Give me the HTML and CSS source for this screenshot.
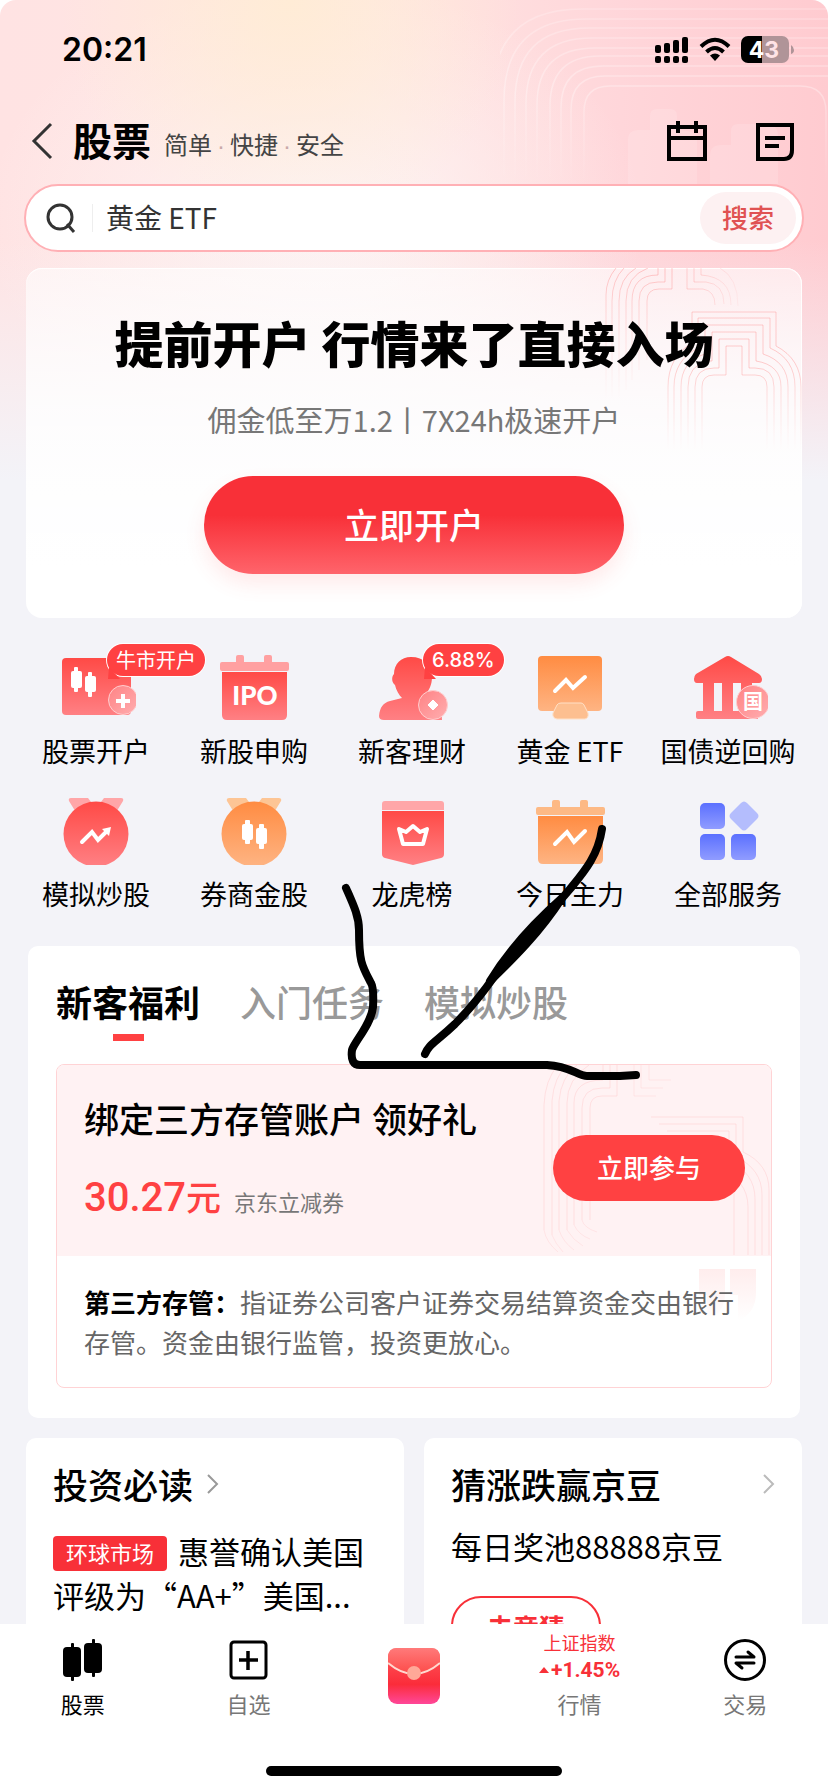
FILE: index.html
```html
<!DOCTYPE html>
<html lang="zh-CN">
<head>
    <meta charset="UTF-8">
    <meta name="viewport" content="width=device-width, initial-scale=1.0">
    <title>股票</title>
    <link rel="stylesheet" href="styles.css">
</head>
<body>
<div class="page">
    <main class="content">
        <svg class="header-lines" width="328" height="184" viewBox="0 0 328 184" fill="none" aria-hidden="true">
            <defs>
                <linearGradient id="lineFade" x1="0" y1="0" x2="0" y2="184" gradientUnits="userSpaceOnUse">
                    <stop offset="0" stop-color="#fff" stop-opacity=".2"/>
                    <stop offset=".5" stop-color="#fff" stop-opacity=".32"/>
                    <stop offset="1" stop-color="#fff" stop-opacity="0"/>
                </linearGradient>
            </defs>
            <g stroke="url(#lineFade)" stroke-width="1.5">
                <path d="M84 184V112q0-26 26-26H300q26 0 26 26v72"/>
                <path d="M71 184V110q0-34 34-34H328"/>
                <path d="M61 184V108q0-42 42-42H328"/>
                <path d="M50 184V106q0-50 50-50H328"/>
                <path d="M37 184V105q0-57 58-57H328"/>
                <path d="M26 184V104q0-66 66-66H328"/>
                <path d="M15 184V102q0-74 74-74H328"/>
                <path d="M4 184V101q0-82 82-82H328"/>
                <path d="M-8 184V99q0-90 90-90H328"/>
            </g>
            <path d="M128 184V140q0-10 10-10h12v-14q0-7 7-7h13q7 0 7 7v14q20 0 20 10v44z" fill="#fff" fill-opacity=".14"/>
            <path d="M210 184v-28q0-11 11-11h10v-14q0-7 7-7h28q12 0 12 12v48z" fill="#fff" fill-opacity=".14"/>
        </svg>

        <div class="status-bar">
            <span class="time">20:21</span>
            <div class="status-icons">
                <svg width="34" height="27" viewBox="0 0 34 27">
                    <rect x="0" y="9" width="6" height="8" rx="2"/>
                    <rect x="9" y="7" width="6" height="10" rx="2"/>
                    <rect x="18" y="4" width="6" height="13" rx="2"/>
                    <rect x="27" y="1" width="6" height="16" rx="2"/>
                    <rect x="0" y="20" width="6" height="7" rx="2"/>
                    <rect x="9" y="20" width="6" height="7" rx="2"/>
                    <rect x="18" y="20" width="6" height="7" rx="2"/>
                    <rect x="27" y="20" width="6" height="7" rx="2"/>
                </svg>
                <svg width="32" height="24" viewBox="0 0 32 24">
                    <path d="M2 9.500Q16-4 30 9.500M7.500 15Q16 7 24.500 15" fill="none" stroke="#000" stroke-width="4"/>
                    <path d="M16 24l-5-5.500q5-4 10 0z"/>
                </svg>
                <svg width="53" height="27" viewBox="0 0 53 27">
                    <path d="M21 0h20a7 7 0 0 1 7 7v13a7 7 0 0 1-7 7H21z" fill="#b09498"/>
                    <path d="M21 0H7a7 7 0 0 0-7 7v13a7 7 0 0 0 7 7h14z"/>
                    <path d="M50 9q3 2 3 5t-3 4z" fill="#b09498"/>
                    <text x="23" y="22" class="battery-text" text-anchor="middle">4<tspan fill="#ffe3e6">3</tspan></text>
                </svg>
            </div>
        </div>

        <header class="nav">
            <button type="button" class="icon-btn" aria-label="返回">
                <svg width="22" height="38" viewBox="0 0 22 38" fill="none" stroke="#333" stroke-width="3">
                    <path d="M20 2L3 19l17 17"/>
                </svg>
            </button>
            <h1>股票</h1>
            <p class="slogan">简单<i>·</i>快捷<i>·</i>安全</p>
            <div class="nav-actions">
                <button type="button" class="icon-btn" aria-label="日历">
                    <svg width="40" height="40" viewBox="0 0 40 40" fill="none" stroke="#000" stroke-width="4">
                        <path d="M2 6h36v32H2zM2 17h36M11 0v12M29 0v12"/>
                    </svg>
                </button>
                <button type="button" class="icon-btn" aria-label="记录">
                    <svg width="38" height="40" viewBox="0 0 38 40" fill="none" stroke="#000" stroke-width="4">
                        <path d="M2 4h34v25q0 9-8 9H2zM9 17h20M9 25h14"/>
                    </svg>
                </button>
            </div>
        </header>

        <form class="search">
            <svg width="30" height="30" viewBox="0 0 30 30" fill="none" stroke="#333" stroke-width="3">
                <circle cx="14" cy="14" r="12"/>
                <path d="M21 21l7 8"/>
            </svg>
            <input type="text" aria-label="搜索股票" value="黄金 ETF">
            <button type="button">搜索</button>
        </form>

        <section class="hero">
            <svg class="hero-lines" width="262" height="200" viewBox="0 8 262 200" fill="none" aria-hidden="true">
                <defs>
                    <linearGradient id="redFade" x1="0" y1="0" x2="0" y2="200" gradientUnits="userSpaceOnUse">
                        <stop offset="0" stop-color="#f66" stop-opacity=".25"/>
                        <stop offset=".5" stop-color="#f66" stop-opacity=".32"/>
                        <stop offset=".95" stop-color="#f66" stop-opacity="0"/>
                    </linearGradient>
                    <linearGradient id="redFadeLeft" x1="0" y1="0" x2="0" y2="140" gradientUnits="userSpaceOnUse">
                        <stop offset="0" stop-color="#f66" stop-opacity=".35"/>
                        <stop offset="1" stop-color="#f66" stop-opacity="0"/>
                    </linearGradient>
                    <linearGradient id="redFadeSide" x1="60" y1="0" x2="215" y2="0" gradientUnits="userSpaceOnUse">
                        <stop offset="0" stop-color="#f66" stop-opacity=".3"/>
                        <stop offset=".6" stop-color="#f66" stop-opacity=".25"/>
                        <stop offset="1" stop-color="#f66" stop-opacity="0"/>
                    </linearGradient>
                </defs>
                <g stroke="url(#redFade)">
                    <path d="M162 200V127q0-12 12-12h12V86h16v29h13q12 0 12 12v73"/>
                    <path d="M155 200V127q0-19 19-19h5V79h30v29h6q19 0 19 19v73"/>
                    <path d="M148 200V127q0-22 20-26h4V72h44v29q25 4 25 26v73"/>
                    <path d="M141 200V127q0-26 24-33V65h58v29q25 8 25 33v73"/>
                    <path d="M134 200V127q0-27 24-39V58h72v30q25 11 25 39v73"/>
                    <path d="M128 200V127q0-30 24-44V52h84v34q25 13 25 41v73"/>
                </g>
                <g stroke="url(#redFadeLeft)">
                    <path d="M107 100V41q0-12 12-12h13V8"/>
                    <path d="M99 110V41q0-19 19-19h7V8"/>
                    <path d="M92 120V41q0-26 26-26V8"/>
                    <path d="M86 130V41Q86 16 108 8"/>
                    <path d="M79 140V41Q79 18 96 8"/>
                    <path d="M72 145V41Q72 20 84 8"/>
                    <path d="M66 145V35Q66 20 76 8"/>
                </g>
                <g stroke="url(#redFadeSide)">
                    <path d="M147 8v21h16q12 2 12 16"/>
                    <path d="M154 8v14h12q18 2 18 22"/>
                    <path d="M161 8v7q30 2 30 30"/>
                    <path d="M180 8q18 10 18 38"/>
                </g>
            </svg>
            <h2>提前开户 行情来了直接入场</h2>
            <p>佣金低至万1.2丨7X24h极速开户</p>
            <button type="button">立即开户</button>
        </section>

        <nav class="services">
            <a href="#">
                <svg width="80" height="72" viewBox="0 0 80 72">
                    <defs>
                        <linearGradient id="red" x1="0" y1="0" x2="0" y2="1">
                            <stop offset="0" stop-color="#ff4a46"/>
                            <stop offset="1" stop-color="#ff8084"/>
                        </linearGradient>
                        <linearGradient id="orange" x1="0" y1="0" x2="0" y2="1">
                            <stop offset="0" stop-color="#ff8c42"/>
                            <stop offset="1" stop-color="#feb483"/>
                        </linearGradient>
                        <linearGradient id="blue" x1="0" y1="0" x2="0" y2="1">
                            <stop offset="0" stop-color="#5b70ff"/>
                            <stop offset="1" stop-color="#909cff"/>
                        </linearGradient>
                        <linearGradient id="coin" x1="0" y1="0" x2="1" y2="1">
                            <stop offset="0" stop-color="#ff8284"/>
                            <stop offset="1" stop-color="#ffaeb0"/>
                        </linearGradient>
                    </defs>
                    <rect x="6" y="8" width="69" height="57" rx="4" fill="url(#red)"/>
                    <g fill="#fff">
                        <rect x="15" y="21" width="11" height="17" rx="2"/>
                        <rect x="18" y="17" width="4" height="25" rx="1"/>
                        <rect x="29" y="26" width="11" height="16" rx="2"/>
                        <rect x="32" y="22" width="4" height="25" rx="1"/>
                    </g>
                    <circle cx="67" cy="50" r="14.500" fill="url(#coin)" stroke="#ffcdce"/>
                    <path d="M60 51h14M67 44v14" stroke="#fff" stroke-width="4"/>
                </svg>
                <span>股票开户</span>
                <em class="badge">牛市开户</em>
            </a>
            <a href="#">
                <svg width="80" height="72" viewBox="0 0 80 72">
                    <path d="M22 12V7q0-2 2-2h4q2 0 2 2v5h20V7q0-2 2-2h4q2 0 2 2v5h15q2 0 2 2v5q0 2-2 2H8q-2 0-2-2v-5q0-2 2-2z" fill="#ffa0a1"/>
                    <path d="M8 22h65v43q0 5-5 5H13q-5 0-5-5z" fill="url(#red)"/>
                    <text x="41" y="55" class="ipo-text" text-anchor="middle">IPO</text>
                </svg>
                <span>新股申购</span>
            </a>
            <a href="#">
                <svg width="80" height="72" viewBox="0 0 80 72">
                    <path d="M39 7c13 0 21 8 21 20 0 8-3 13-6 17-2 4 0 6 3 7 9 3 13 8 13 19H12q-5 0-5-4c1-9 4-13 11-15l12-3c-3-3-6-8-7-13-3-2-4-8-1-11 0-10 7-17 17-17z" fill="url(#red)"/>
                    <circle cx="61" cy="55" r="14.500" fill="url(#coin)" stroke="#ffcdce"/>
                    <path d="M61 50l5 5-5 5-5-5z" fill="#fff" stroke="#fff" stroke-linejoin="round"/>
                </svg>
                <span>新客理财</span>
                <em class="badge rate">6.88%</em>
            </a>
            <a href="#">
                <svg width="80" height="72" viewBox="0 0 80 72">
                    <rect x="8" y="6" width="64" height="55" rx="4" fill="url(#orange)"/>
                    <path d="M31 53h20q2 0 3 2l4 8q1 5-3 6H27q-5-1-4-6l4-8q1-2 4-2z" fill="#fdbf90" stroke="#ffe0c6"/>
                    <path d="M25 41l11-11 7 8 12-11" fill="none" stroke="#fff" stroke-width="4" stroke-linecap="round"/>
                </svg>
                <span>黄金 ETF</span>
            </a>
            <a href="#">
                <svg width="80" height="72" viewBox="0 0 80 72">
                    <path d="M37 7q3-2 6 0l28 17q3 2 3 5 0 4-3 4h-7v28h4q2 0 2 3v5H10q-2 0-2-2v-4q0-2 2-2h5V33H9q-3 0-3-4 0-3 2-5zM26 33v28h8V33zM45 33v28h8V33z" fill="url(#red)"/>
                    <circle cx="65" cy="52" r="16.500" fill="url(#coin)" stroke="#ffcdce"/>
                    <text x="65" y="59" class="coin-text" text-anchor="middle">国</text>
                </svg>
                <span>国债逆回购</span>
            </a>
            <a href="#">
                <svg width="80" height="72" viewBox="0 0 80 72">
                    <path d="M15 5h17l6 8-17 8-8-13q-1-3 2-3zM65 5H48l-6 8 17 8 8-13q1-3-2-3z" fill="#ffa6a8"/>
                    <circle cx="40" cy="41" r="32.500" fill="url(#red)"/>
                    <path d="M26 49l10-10 6 8 9-9" fill="none" stroke="#fff" stroke-width="4" stroke-linecap="round"/>
                    <path d="M46 36l9-2-2 9z" fill="#fff"/>
                </svg>
                <span>模拟炒股</span>
            </a>
            <a href="#">
                <svg width="80" height="72" viewBox="0 0 80 72">
                    <path d="M15 5h17l6 8-17 8-8-13q-1-3 2-3zM65 5H48l-6 8 17 8 8-13q1-3-2-3z" fill="#fdc595"/>
                    <circle cx="40" cy="41" r="32.500" fill="url(#orange)"/>
                    <g fill="#fff">
                        <rect x="28" y="31" width="11" height="16" rx="2"/>
                        <rect x="31" y="27" width="5" height="24" rx="1"/>
                        <rect x="42" y="35" width="11" height="16" rx="2"/>
                        <rect x="45" y="31" width="5" height="25" rx="1"/>
                    </g>
                </svg>
                <span>券商金股</span>
            </a>
            <a href="#">
                <svg width="80" height="72" viewBox="0 0 80 72">
                    <path d="M10 17v-6q0-3 3-3h56q3 0 3 3v6z" fill="#ffa6a8"/>
                    <path d="M10 18h62v43q0 3-3 4l-28 7-28-7q-3-1-3-4z" fill="url(#red)"/>
                    <path d="M27 36l7 3 7-6 7 6 7-3-4 15H31z" fill="none" stroke="#fff" stroke-width="4" stroke-linejoin="round"/>
                </svg>
                <span>龙虎榜</span>
            </a>
            <a href="#">
                <svg width="80" height="72" viewBox="0 0 80 72">
                    <path d="M22 14V9q0-2 2-2h4q2 0 2 2v5h20V9q0-2 2-2h4q2 0 2 2v5h15q2 0 2 2v4q0 2-2 2H8q-2 0-2-2v-4q0-2 2-2z" fill="#fdb985"/>
                    <path d="M8 23h65v43q0 5-5 5H13q-5 0-5-5z" fill="url(#orange)"/>
                    <path d="M25 51l12-12 7 10 11-11" fill="none" stroke="#fff" stroke-width="4" stroke-linecap="round"/>
                </svg>
                <span>今日主力</span>
            </a>
            <a href="#">
                <svg width="80" height="72" viewBox="0 0 80 72">
                    <rect x="12" y="10" width="25" height="26" rx="5" fill="url(#blue)"/>
                    <rect x="12" y="41" width="25" height="26" rx="5" fill="url(#blue)"/>
                    <rect x="43" y="41" width="25" height="26" rx="5" fill="url(#blue)"/>
                    <path d="M53 10q3-3 6 0l10 10q3 3 0 6L59 36q-3 3-6 0L43 26q-3-3 0-6z" fill="#b4bdfd"/>
                </svg>
                <span>全部服务</span>
            </a>
        </nav>

        <section class="welfare">
            <div class="tabs">
                <button type="button" class="active">新客福利</button>
                <button type="button">入门任务</button>
                <button type="button">模拟炒股</button>
            </div>
            <div class="offer">
                <div class="offer-top">
                    <svg class="offer-lines" width="236" height="190" viewBox="6 10 236 190" fill="none" stroke="#ffc4c6" stroke-opacity=".4" aria-hidden="true">
                        <path d="M61 165V53q0-12 12-12h15V10M53 165V53q0-20 20-20h8V10M45 170V48q0-23 29-23V10M38 175V48Q38 24 60 10M30 175V46Q32 22 48 10M23 180V46Q25 22 38 10M15 175V50Q16 25 29 10"/>
                        <path d="M15 175q2 12 14 22M23 180q3 8 11 17M30 175q4 12 15 20M38 175q6 10 16 16M45 170q5 10 16 14M53 165q2 8 15 12" stroke-opacity=".3"/>
                        <path d="M105 10v31h22M112 10v23h22M120 10v15h22" stroke-opacity=".3"/>
                        <path d="M122 62h92v35q26 12 26 38v65M130 69h77v33q26 12 26 38v60M138 76h62v30q26 12 26 38v56M211 128q8 10 8 24v48M205 134v66"/>
                    </svg>
                    <div class="offer-info">
                        <h3>绑定三方存管账户 领好礼</h3>
                        <p><strong>30.27<b>元</b></strong>京东立减券</p>
                    </div>
                    <button type="button">立即参与</button>
                </div>
                <div class="offer-desc">
                    <svg class="quote" width="58" height="52" viewBox="0 0 58 52" aria-hidden="true">
                        <defs>
                            <linearGradient id="quoteFade" x1="0" y1="0" x2="0" y2="1">
                                <stop offset="0" stop-color="#ffeded"/>
                                <stop offset="1" stop-color="#fff"/>
                            </linearGradient>
                        </defs>
                        <path d="M0 0h26v24q0 20-18 28V26H0zM31 0h26v24q0 20-18 28V26h-8z" fill="url(#quoteFade)"/>
                    </svg>
                    <p><strong>第三方存管：</strong>指证券公司客户证券交易结算资金交由银行存管。资金由银行监管，投资更放心。</p>
                </div>
            </div>
        </section>

        <div class="feeds">
            <section class="feed">
                <h3>投资必读
                    <svg width="12" height="20" viewBox="0 0 12 20" fill="none" stroke="#999" stroke-width="2"><path d="M1 1l9 9-9 9"/></svg>
                </h3>
                <p class="news"><span class="tag">环球市场</span>惠誉确认美国评级为“AA+”美国...</p>
            </section>
            <section class="feed">
                <h3 class="spread">猜涨跌赢京豆
                    <svg width="12" height="20" viewBox="0 0 12 20" fill="none" stroke="#bbb" stroke-width="2"><path d="M1 1l9 9-9 9"/></svg>
                </h3>
                <p class="prize">每日奖池88888京豆</p>
                <button type="button" class="guess">去竞猜</button>
            </section>
        </div>

        <!-- hand-drawn marker strokes -->
        <svg class="marker" width="320" height="280" viewBox="330 810 320 280" fill="none" stroke="#000" stroke-width="8" stroke-linecap="round" stroke-linejoin="round" aria-hidden="true">
            <path d="M346 888C353 904 359 916 359 930C359 962 362 966 371 983Q374 988 373 1007C371 1025 354 1042 352 1050Q350 1065 360 1065H547C570 1066 578 1076 587 1076H620L636 1075"/>
            <path d="M602 829C598 856 584 872 570 889C545 919 520 940 496 974C478 1000 467 1012 455 1024C435 1043 429 1044 425 1054"/>
            <path d="M562 898C535 922 510 948 490 981C514 958 540 932 562 898Z" fill="#000"/>
        </svg>
    </main>

    <footer class="tabbar">
        <div class="tabbar-items">
            <a href="#" class="current">
                <svg width="40" height="42" viewBox="0 0 40 42">
                    <rect x="0" y="8" width="18" height="30" rx="4"/>
                    <rect x="8" y="4" width="3" height="38" rx="1"/>
                    <rect x="21" y="4" width="18" height="30" rx="4"/>
                    <rect x="29" y="0" width="3" height="38" rx="1"/>
                </svg>
                <span>股票</span>
            </a>
            <a href="#">
                <svg width="40" height="42" viewBox="0 0 40 42" fill="none" stroke="#000" stroke-width="3">
                    <rect x="3" y="3" width="35" height="36" rx="3"/>
                    <path d="M11 21h19M20 12v19" stroke-width="3.500"/>
                </svg>
                <span>自选</span>
            </a>
            <a href="#" class="packet" aria-label="红包">
                <svg width="52" height="56" viewBox="0 0 52 56">
                    <defs>
                        <linearGradient id="packetBody" x1="0" y1="0" x2="0" y2="1">
                            <stop offset="0" stop-color="#ff5c5c"/>
                            <stop offset=".65" stop-color="#fb2c3a"/>
                            <stop offset="1" stop-color="#ff4799"/>
                        </linearGradient>
                        <linearGradient id="packetTop" x1="0" y1="0" x2="0" y2="1">
                            <stop offset="0" stop-color="#ff7a7a"/>
                            <stop offset="1" stop-color="#fd4a48"/>
                        </linearGradient>
                    </defs>
                    <rect width="52" height="56" rx="9" fill="url(#packetBody)"/>
                    <path d="M0 15V9q0-9 9-9h34q9 0 9 9v6Q26 37 0 15z" fill="url(#packetTop)"/>
                    <path d="M0 15Q26 37 52 15" fill="none" stroke="#ffd9d0" stroke-width="2"/>
                    <circle cx="26" cy="25" r="7" fill="#ffa898"/>
                </svg>
            </a>
            <a href="#" class="market">
                <small>上证指数</small>
                <strong><svg width="10" height="6" viewBox="0 0 10 6" fill="#f83038"><path d="M5 0l5 6H0z"/></svg>+1.45%</strong>
                <span>行情</span>
            </a>
            <a href="#">
                <svg width="42" height="42" viewBox="0 0 42 42" fill="none" stroke="#000" stroke-width="3">
                    <circle cx="21" cy="21" r="19.500"/>
                    <path d="M12 18h18l-6-5M30 24H12l6 5" stroke-linejoin="round" stroke-linecap="round"/>
                </svg>
                <span>交易</span>
            </a>
        </div>
        <div class="home-indicator"></div>
    </footer>
</div>
</body>
</html>
```
FILE: styles.css
```css
* {
    box-sizing: border-box;
    margin: 0;
    padding: 0;
}
body {
    font-family: "Noto Sans CJK SC", "Noto Sans", sans-serif;
    color: #000;
    background: #fff;
}
button, input {
    font-family: inherit;
    border: none;
    background: none;
}
button {
    cursor: pointer;
}
a {
    color: inherit;
    text-decoration: none;
}
i, em {
    font-style: normal;
}
svg {
    display: block;
    flex-shrink: 0;
}
.page {
    display: flex;
    flex-direction: column;
    height: 100vh;
}
.content {
    position: relative;
    flex: 1;
    min-height: 0;
    overflow: hidden;
    border-radius: 16px 16px 0 0;
    background:
        linear-gradient(to bottom, rgba(243, 243, 248, 0) 240px, #f3f3f8 480px),
        radial-gradient(circle at 35% 0, #ffecd6 0, rgba(255, 236, 214, 0) 230px),
        radial-gradient(ellipse 330px 240px at 38% 220px, #fdf4f4 0, rgba(253, 244, 244, 0) 100%),
        linear-gradient(to right, #ffe3e3 0, #ffe6e3 45%, #ffd6da 75%, #ffcbd0 100%);
    background-color: #f3f3f8;
}
.header-lines {
    position: absolute;
    top: 0;
    right: 0;
}

/* status bar */
.status-bar {
    position: relative;
    display: flex;
    justify-content: space-between;
    align-items: center;
    height: 98px;
    padding: 0 34px 0 62px;
}
.time {
    font-family: Inter, sans-serif;
    font-size: 32px;
    font-weight: 600;
}
.status-icons {
    display: flex;
    align-items: center;
    gap: 10px;
}
.battery-text {
    font-family: Inter, sans-serif;
    font-size: 23px;
    font-weight: 700;
    fill: #fff;
}

/* title bar */
.nav {
    position: relative;
    display: flex;
    align-items: center;
    height: 86px;
    padding: 0 34px 0 31px;
}
.nav h1 {
    margin-left: 20px;
    padding-bottom: 4px;
    font-size: 39px;
    line-height: 56px;
}
.slogan {
    margin: 4px 0 0 13px;
    font-size: 24px;
    color: #444;
}
.slogan i {
    padding: 0 5px;
    font-family: "Liberation Sans", sans-serif;
    color: #c9a9a9;
}
.nav-actions {
    display: flex;
    gap: 49px;
    margin-left: auto;
}

.search {
    position: relative;
    display: flex;
    align-items: center;
    height: 68px;
    margin: 0 24px;
    padding: 0 6px 0 20px;
    border: 2px solid #ffb0b5;
    border-radius: 34px;
    background: #fff;
}
.search input {
    flex: 1;
    min-width: 0;
    height: 28px;
    margin-left: 16px;
    padding-left: 13px;
    padding-bottom: 2px;
    border-left: 1px solid #eee;
    font-size: 28px;
    color: #333;
}
.search button {
    width: 96px;
    height: 52px;
    padding-bottom: 3px;
    border-radius: 26px;
    background: #fdf1f2;
    color: #e05252;
    font-size: 26px;
    font-weight: 500;
}

/* open account card */
.hero {
    position: relative;
    display: flex;
    flex-direction: column;
    align-items: center;
    margin: 16px 26px 0;
    padding: 42px 0 44px;
    border-radius: 16px;
    background: linear-gradient(to bottom, rgba(255, 255, 255, 0.55) 0, rgba(255, 255, 255, 0.8) 130px, #fff 300px);
    box-shadow: inset 0 1px 1px #fff, inset -1px 0 1px #fff;
    text-align: center;
}
.hero-lines {
    position: absolute;
    top: 0;
    right: 0;
}
.hero h2 {
    position: relative;
    font-size: 49px;
    font-weight: 900;
    line-height: 64px;
}
.hero p {
    margin-top: 25px;
    font-size: 29px;
    line-height: 40px;
    color: #777;
}
.hero button {
    width: 54%;
    height: 98px;
    margin-top: 37px;
    padding-bottom: 4px;
    border-radius: 49px;
    background: linear-gradient(to bottom, #f83038 0, #f83038 40%, #ff646b 100%);
    box-shadow: 0 10px 20px rgba(255, 80, 80, 0.12);
    color: #fff;
    font-size: 35px;
    font-weight: 500;
}

/* service grid */
.services {
    display: grid;
    grid-template-columns: repeat(5, 1fr);
    row-gap: 23px;
    margin: 32px 21px 0 17px;
}
.services a {
    position: relative;
    display: flex;
    flex-direction: column;
    align-items: center;
    gap: 10px;
    font-size: 27px;
    line-height: 38px;
    white-space: nowrap;
}
.badge {
    position: absolute;
    top: -6px;
    left: 57%;
    height: 32px;
    padding: 0 9px;
    border-radius: 16px;
    background: #ff4142;
    box-shadow: 0 0 0 1px #fff;
    color: #fff;
    font-size: 20px;
    line-height: 31px;
}
.badge.rate {
    font-family: Inter, sans-serif;
    font-weight: 500;
    line-height: 33px;
}
.badge::after {
    content: "";
    position: absolute;
    left: 1px;
    bottom: -3px;
    border-left: 1px solid transparent;
    border-right: 11px solid transparent;
    border-bottom: 12px solid #ff4142;
}
.ipo-text {
    font-family: Lato, sans-serif;
    font-size: 26px;
    font-weight: 900;
    fill: #fff;
}
.coin-text {
    font-size: 20px;
    font-weight: 700;
    fill: #fff;
}

/* new customer benefits */
.welfare {
    margin: 33px 28px 0;
    padding: 30px 28px;
    border-radius: 10px;
    background: #fff;
}
.tabs {
    display: flex;
    gap: 40px;
    height: 88px;
}
.tabs button {
    display: flex;
    flex-direction: column;
    align-items: center;
    color: #999;
    font-size: 36px;
    font-weight: 500;
    line-height: 50px;
}
.tabs .active {
    color: #000;
    font-weight: 700;
}
.tabs .active::after {
    content: "";
    width: 31px;
    height: 7px;
    margin-top: 8px;
    background: #ff4142;
}
.offer {
    overflow: hidden;
    border: 1px solid #ffd3d5;
    border-radius: 8px;
}
.offer-top {
    position: relative;
    display: flex;
    justify-content: space-between;
    align-items: flex-start;
    height: 191px;
    padding: 27px 26px 0 27px;
    background: #fff2f3;
}
.offer-lines {
    position: absolute;
    top: 0;
    right: 0;
}
.offer h3 {
    font-size: 35px;
    font-weight: 500;
    line-height: 52px;
}
.offer-info p {
    margin-top: 30px;
    font-size: 22px;
    line-height: 48px;
    color: #777;
}
.offer-info strong {
    margin-right: 13px;
    font-family: Roboto, "Noto Sans CJK SC", sans-serif;
    font-size: 40px;
    font-weight: 500;
    color: #ff4142;
}
.offer-info b {
    font-size: 35px;
    font-weight: 500;
}
.offer-top button {
    position: relative;
    width: 192px;
    height: 66px;
    margin-top: 43px;
    padding-bottom: 3px;
    border-radius: 33px;
    background: #ff4142;
    color: #fff;
    font-size: 26px;
    font-weight: 500;
}
.offer-desc {
    position: relative;
    padding: 26px 27px 25px;
    font-size: 26px;
    line-height: 40px;
    color: #666;
}
.offer-desc p {
    position: relative;
}
.offer-desc strong {
    color: #000;
}
.quote {
    position: absolute;
    top: 13px;
    right: 14px;
}

/* bottom feed cards */
.feeds {
    display: grid;
    grid-template-columns: 1fr 1fr;
    gap: 20px;
    margin: 20px 26px 0;
}
.feed {
    height: 260px;
    padding: 22px 27px;
    border-radius: 10px;
    background: #fff;
}
.feed h3 {
    display: flex;
    align-items: center;
    gap: 14px;
    font-size: 35px;
    font-weight: 500;
    line-height: 48px;
}
.feed .spread {
    justify-content: space-between;
}
.news {
    margin-top: 21px;
    font-size: 31px;
    line-height: 44px;
}
.tag {
    display: inline-block;
    height: 35px;
    margin-right: 11px;
    padding: 0 13px;
    border-radius: 4px;
    background: #f83038;
    color: #fff;
    font-size: 22px;
    line-height: 33px;
    vertical-align: 2px;
}
.prize {
    margin-top: 16px;
    font-size: 31px;
    line-height: 44px;
}
.guess {
    width: 150px;
    height: 60px;
    margin-top: 28px;
    border: 2px solid #f83038;
    border-radius: 30px;
    color: #f83038;
    font-size: 26px;
    font-weight: 700;
}

.marker {
    position: absolute;
    top: 810px;
    left: 330px;
}

/* bottom tab bar */
.tabbar {
    display: flex;
    flex-direction: column;
    justify-content: space-between;
    align-items: center;
    height: 168px;
    padding-bottom: 16px;
    background: #fff;
}
.tabbar-items {
    display: grid;
    grid-template-columns: repeat(5, 1fr);
    width: 100%;
    height: 94px;
}
.tabbar a {
    display: flex;
    flex-direction: column;
    justify-content: flex-end;
    align-items: center;
    gap: 7px;
    font-size: 22px;
    line-height: 30px;
    color: #777;
}
.tabbar .current {
    color: #000;
}
.tabbar .packet {
    padding-bottom: 14px;
}
.tabbar .market {
    gap: 0;
}
.market small {
    font-size: 18px;
    line-height: 27px;
    color: #f83038;
}
.market strong {
    display: flex;
    align-items: center;
    gap: 2px;
    margin-bottom: 4px;
    font-family: Roboto, sans-serif;
    font-size: 21px;
    font-weight: 700;
    line-height: 28px;
    color: #f83038;
}
.home-indicator {
    width: 296px;
    height: 10px;
    border-radius: 5px;
    background: #000;
}
```
